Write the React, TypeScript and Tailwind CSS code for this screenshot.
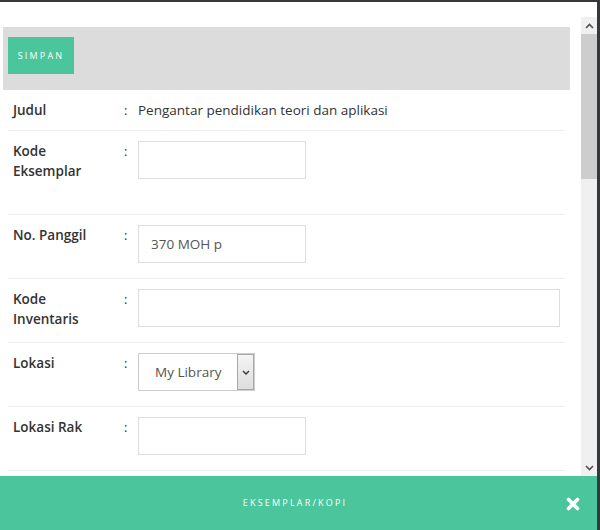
import type { ReactNode } from 'react';

// Copy-item form modal ("Eksemplar/Kopi"): a grey action bar with the save
// button, a list of label : field rows, and a green footer with a close icon.

function Row({ label, h, children }: { label: ReactNode; h: string; children: ReactNode }) {
  return (
    <div className={'flex border-b border-[#eeeeee] pt-[10px] ' + h}>
      <div className="w-[116px] shrink-0 pl-[5px] text-[13.5px] font-semibold leading-[20px] text-[#333]">
        {label}
      </div>
      <div className="w-[14px] shrink-0 text-[13px] leading-[20px] text-[#333]">:</div>
      <div className="min-w-0 flex-1 text-[13.5px] leading-[20px] text-[#333]">{children}</div>
    </div>
  );
}

function TextInput({ w, value }: { w: string; value?: string }) {
  return (
    <input
      readOnly
      defaultValue={value}
      className={
        'block h-[38px] border border-[#dddddd] bg-white px-[12px] text-[13.5px] text-[#555] outline-none ' + w
      }
    />
  );
}

function Scrollbar() {
  return (
    <div className="flex w-[16px] shrink-0 flex-col bg-[#f0f0f0]">
      <div className="flex h-[17px] items-center justify-center">
        <svg width="9" height="6" viewBox="0 0 9 6" aria-hidden>
          <path d="M1 5l3.5-3.5L8 5" fill="none" stroke="#505050" strokeWidth="1.6" />
        </svg>
      </div>
      <div className="h-[145px] bg-[#cdcdcd]" />
      <div className="flex-1" />
      <div className="flex h-[17px] items-center justify-center">
        <svg width="9" height="6" viewBox="0 0 9 6" aria-hidden>
          <path d="M1 1l3.5 3.5L8 1" fill="none" stroke="#505050" strokeWidth="1.6" />
        </svg>
      </div>
    </div>
  );
}

export default function App() {
  return (
    <div className="h-[530px] w-[600px] overflow-hidden bg-[#36383c] pt-[2px] pr-[3px] font-['Open_Sans',sans-serif]">
      <div className="flex h-[528px] flex-col bg-white">
        <div className="flex h-[474px] pt-[15px]">
          <div className="min-w-0 flex-1 overflow-hidden pt-[10px] pl-[3px] pr-[11px]">
            <div className="h-[63px] bg-[#dcdcdc] pt-[10px] pl-[5px]">
              <button
                type="button"
                className="h-[37px] w-[66px] bg-[#4bc59b] text-[9px] tracking-[2.2px] text-white"
              >
                SIMPAN
              </button>
            </div>
            <div className="mx-[5px]">
              <Row label="Judul" h="h-[41px]">
                Pengantar pendidikan teori dan aplikasi
              </Row>
              <Row
                label={
                  <>
                    Kode
                    <br />
                    Eksemplar
                  </>
                }
                h="h-[84px]"
              >
                <TextInput w="w-[168px]" />
              </Row>
              <Row label="No. Panggil" h="h-[64px]">
                <TextInput w="w-[168px]" value="370 MOH p" />
              </Row>
              <Row
                label={
                  <>
                    Kode
                    <br />
                    Inventaris
                  </>
                }
                h="h-[64px]"
              >
                <TextInput w="w-[422px]" />
              </Row>
              <Row label="Lokasi" h="h-[64px]">
                <div className="flex h-[38px] w-[117px] border border-[#cccccc] bg-white">
                  <span className="flex flex-1 items-center pl-[16px] text-[13.5px] text-[#555]">My Library</span>
                  <span className="flex w-[17px] items-center justify-center border border-[#a8a8a8] bg-gradient-to-b from-[#f4f4f4] to-[#dedede]">
                    <svg width="8" height="5" viewBox="0 0 8 5" aria-hidden>
                      <path d="M1 1l3 3 3-3" fill="none" stroke="#404040" strokeWidth="1.5" />
                    </svg>
                  </span>
                </div>
              </Row>
              <Row label="Lokasi Rak" h="h-[64px]">
                <TextInput w="w-[168px]" />
              </Row>
            </div>
          </div>
          <Scrollbar />
        </div>
        <footer className="relative flex h-[54px] items-center justify-center bg-[#4bc59b]">
          <span className="pr-[7px] text-[9px] tracking-[2.2px] text-white">EKSEMPLAR/KOPI</span>
          <button type="button" aria-label="Close" className="absolute right-[17px] top-[21px]">
            <svg width="14" height="14" viewBox="0 0 14 14" aria-hidden>
              <path d="M2.5 2.5l9 9M11.5 2.5l-9 9" stroke="#ffffff" strokeWidth="3.6" strokeLinecap="round" />
            </svg>
          </button>
        </footer>
      </div>
    </div>
  );
}
